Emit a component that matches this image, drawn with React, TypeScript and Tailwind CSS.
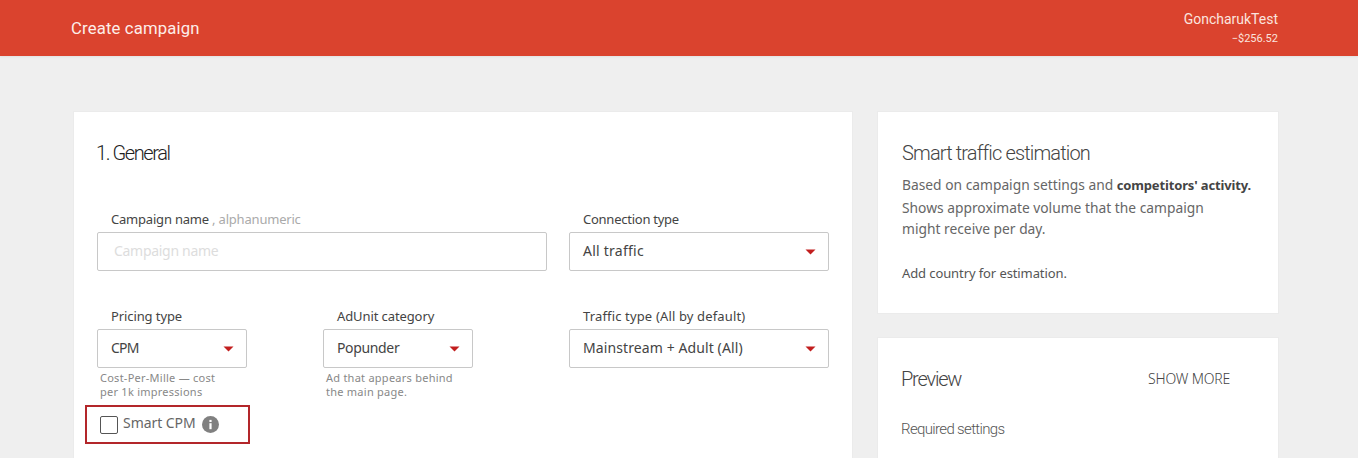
import React from "react";

const body = "font-['Noto_Sans','Open_Sans',sans-serif]";
const head = "font-['Roboto',sans-serif] font-light";

function Caret() {
  return (
    <svg width="11" height="6" viewBox="0 0 11 6" className="shrink-0">
      <path d="M0.5 0.5H10.5L5.5 5.5Z" fill="#c21e1e" />
    </svg>
  );
}

function Select({
  label,
  value,
  width,
  labelClass,
  valueClass,
}: {
  label: string;
  value: string;
  width: string;
  labelClass: string;
  valueClass: string;
}) {
  return (
    <div className={`flex flex-col ${width}`}>
      <div className={`h-[19px] pl-[14px] text-[13px] leading-[19px] text-[#444] whitespace-nowrap ${labelClass}`}>{label}</div>
      <div className="mt-[3px] flex h-[39px] items-center justify-between rounded-[2px] border border-[#c8c8c8] bg-white pl-[13px] pr-[12px] text-[14px] text-[#444] whitespace-nowrap">
        <span className={`pb-[2px] ${valueClass}`}>{value}</span>
        <Caret />
      </div>
    </div>
  );
}

export default function App() {
  return (
    <div className={`h-[458px] w-[1358px] overflow-hidden bg-[#efefef] ${body}`}>
      <header className="flex h-14 items-center justify-between bg-[#da432e] pl-[71px] pr-20 shadow-[0_1px_2px_rgba(0,0,0,0.06)] font-['Roboto',sans-serif] text-white">
        <div className="pt-[2px] text-[16.7px] tracking-[0.15px] text-[#fdeeea]">Create campaign</div>
        <div className="text-right">
          <div className="text-[14px] leading-[20px] text-[#fbe4df]">GoncharukTest</div>
          <div className="mt-[2px] text-[11px] leading-[16px] text-[#fbe4df]">−$256.52</div>
        </div>
      </header>

      <main className="flex items-start gap-6 pl-[73px] pt-[55px]">
        <section className="h-[400px] w-[780px] shrink-0 border border-[#ebebeb] bg-white pl-[23px] pr-[23px]">
          <h2 className={`mt-[27px] h-[28px] -ml-[1px] text-[20px] leading-[28px] tracking-[-1.4px] text-[#222] ${head}`}>1. General</h2>
          <div className="mt-[43px] flex justify-between">
            <div className="flex w-[450px] flex-col">
              <div className="h-[19px] pl-[14px] text-[13px] leading-[19px] text-[#444] whitespace-nowrap tracking-[-0.2px]">
                Campaign name <span className="text-[#aaa]">, alphanumeric</span>
              </div>
              <div className="mt-[3px] flex h-[39px] items-center rounded-[2px] border border-[#c8c8c8] bg-white pb-[2px] pl-4 text-[14px] text-[#ddd] tracking-[-0.3px]">
                Campaign name
              </div>
            </div>
            <Select
              label="Connection type"
              value="All traffic"
              width="w-[260px]"
              labelClass="tracking-[-0.25px]"
              valueClass="tracking-[0.25px]"
            />
          </div>

          <div className="mt-[36px] flex items-start">
            <div className="w-[226px]">
              <Select label="Pricing type" value="CPM" width="w-[150px]" labelClass="tracking-[-0.1px]" valueClass="tracking-[-0.8px]" />
              <p className="mt-[3px] w-[125px] pl-[3px] text-[11px] leading-[14px] tracking-[0.25px] text-[#888]">
                Cost-Per-Mille — cost per 1k impressions
              </p>
              <div className="-ml-3 mt-[6px] flex h-[39px] w-[165px] items-center border-2 border-[#b3262a] pl-[13px] text-[#666]">
                <span className="h-[18px] w-[18px] rounded-[2px] border border-[#555] bg-white" />
                <span className="ml-[5px] pb-[4px] text-[14px] tracking-[-0.05px]">Smart CPM</span>
                <svg width="17" height="17" viewBox="0 0 17 17" className="ml-[6px]">
                  <circle cx="8.5" cy="8.5" r="8.5" fill="#808080" />
                  <rect x="7.4" y="7.2" width="2.2" height="6" fill="#fff" />
                  <rect x="7.4" y="3.9" width="2.2" height="2.1" fill="#fff" />
                </svg>
              </div>
            </div>
            <div className="w-[246px]">
              <Select label="AdUnit category" value="Popunder" width="w-[150px]" labelClass="tracking-[-0.1px]" valueClass="tracking-[-0.35px]" />
              <p className="mt-[3px] w-[140px] pl-[3px] text-[11px] leading-[14px] tracking-[0.25px] text-[#888]">
                Ad that appears behind the main page.
              </p>
            </div>
            <Select
              label="Traffic type (All by default)"
              value="Mainstream + Adult (All)"
              width="w-[260px]"
              labelClass="tracking-[0.15px]"
              valueClass="tracking-[0.1px]"
            />
          </div>
        </section>

        <aside className="flex w-[402px] shrink-0 flex-col gap-[23px]">
          <section className="h-[203px] border border-[#ebebeb] bg-white pl-6 pt-[27px]">
            <h3 className={`h-[28px] text-[20px] leading-[28px] tracking-[-0.85px] text-[#444] ${head}`}>Smart traffic estimation</h3>
            <p className="mt-[7px] text-[13.8px] leading-[21.5px] text-[#666]">
              Based on campaign settings and <b className="text-[13px] font-bold tracking-[-0.15px] text-[#444]">competitors' activity.</b>
              <br />
              Shows approximate volume that the campaign
              <br />
              might receive per day.
            </p>
            <p className="mt-[23px] text-[13px] leading-[20px] text-[#555] tracking-[-0.1px]">Add country for estimation.</p>
          </section>
          <section className="h-[200px] border border-[#ebebeb] bg-white pl-[23px] pr-[48px] pt-[27px]">
            <div className="flex h-[28px] items-center justify-between">
              <h3 className={`text-[20px] leading-[28px] tracking-[-1.2px] text-[#444] ${head}`}>Preview</h3>
              <span className="pb-[2px] text-[14px] font-light text-[#444] tracking-[-0.2px]">SHOW MORE</span>
            </div>
            <p className={`mt-[26px] text-[15px] leading-[20px] tracking-[-0.65px] text-[#555] ${head}`}>Required settings</p>
          </section>
        </aside>
      </main>
    </div>
  );
}
